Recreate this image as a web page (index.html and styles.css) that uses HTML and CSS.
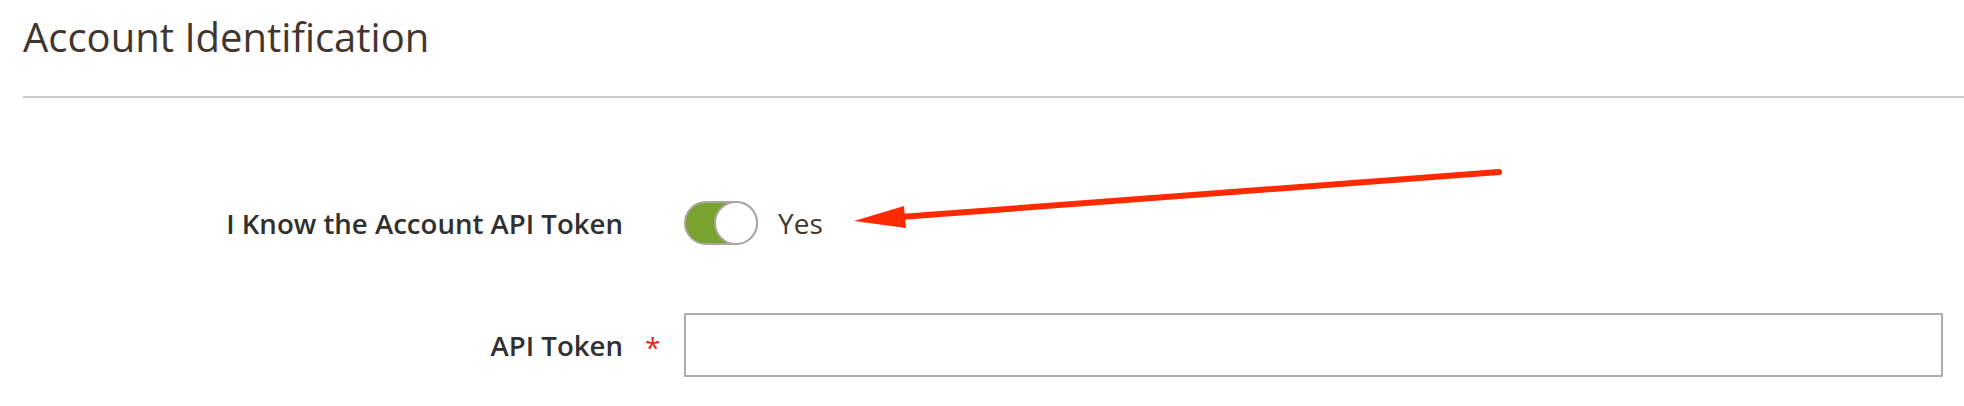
FILE: index.html
```html
<!DOCTYPE html>
<html lang="en">
<head>
<meta charset="utf-8">
<title>Account Identification</title>
<link rel="stylesheet" href="styles.css">
</head>
<body>
<div class="page">
  <section class="section">
    <h2 class="section-title">Account Identification</h2>
    <div class="fieldset">
      <div class="field-label"><span>I Know the Account API Token</span></div>
      <div class="field-control">
        <span class="switch"><span class="switch-knob"></span></span>
        <span class="switch-text">Yes</span>
      </div>
      <div class="field-label"><span class="required">API Token</span></div>
      <div class="field-control">
        <input class="text-input" type="text" aria-label="API Token">
      </div>
    </div>
  </section>
  <svg class="annotation" width="1964" height="406" viewBox="0 0 1964 406" aria-hidden="true">
    <line x1="1499" y1="172" x2="900" y2="217" stroke="#ff2a00" stroke-width="6" stroke-linecap="round"/>
    <polygon points="854,221 904,206 906,228" fill="#ff2a00"/>
  </svg>
</div>
</body>
</html>
```

FILE: styles.css
```css
html, body {
  margin: 0;
  padding: 0;
  background: #ffffff;
}

body {
  font-family: "Open Sans", "DejaVu Sans", sans-serif;
  width: 1964px;
  height: 406px;
  overflow: hidden;
}

.page {
  position: relative;
  width: 1964px;
  height: 406px;
}

.section {
  padding-left: 23px;
}

.section-title {
  margin: 0;
  padding-top: 13px;
  padding-bottom: 35px;
  font-size: 40px;
  line-height: 48px;
  font-weight: 400;
  color: #41362f;
  border-bottom: 2px solid #cccccc;
}

.fieldset {
  display: grid;
  grid-template-columns: 600px 1fr;
  column-gap: 61px;
  row-gap: 68px;
  align-items: center;
  padding-top: 103px;
  padding-right: 21px;
}

.field-label {
  text-align: right;
  font-size: 27.6px;
  font-weight: 600;
  color: #303030;
  line-height: 44px;
}

.required {
  position: relative;
}

.required::after {
  content: "*";
  position: absolute;
  left: calc(100% + 22px);
  top: -1px;
  color: #e22626;
  font-size: 28px;
  font-weight: 400;
}

.field-control {
  display: flex;
  align-items: center;
  gap: 20px;
}

.switch {
  box-sizing: border-box;
  display: flex;
  justify-content: flex-end;
  width: 74px;
  height: 44px;
  border: 2px solid #a9a6a2;
  border-radius: 22px;
  background: #79a22e;
}

.switch-knob {
  box-sizing: border-box;
  width: 44px;
  height: 44px;
  margin: -2px;
  border: 2px solid #a9a6a2;
  border-radius: 50%;
  background: #ffffff;
}

.switch-text {
  font-size: 28px;
  line-height: 44px;
  color: #41362f;
}

.text-input {
  box-sizing: border-box;
  width: 100%;
  height: 64px;
  margin: 0;
  border: 2px solid #adadad;
  border-radius: 1px;
  background: #ffffff;
  font-family: inherit;
  font-size: 28px;
  padding: 0 16px;
  outline: none;
}

.annotation {
  position: absolute;
  top: 0;
  left: 0;
  pointer-events: none;
}
```
